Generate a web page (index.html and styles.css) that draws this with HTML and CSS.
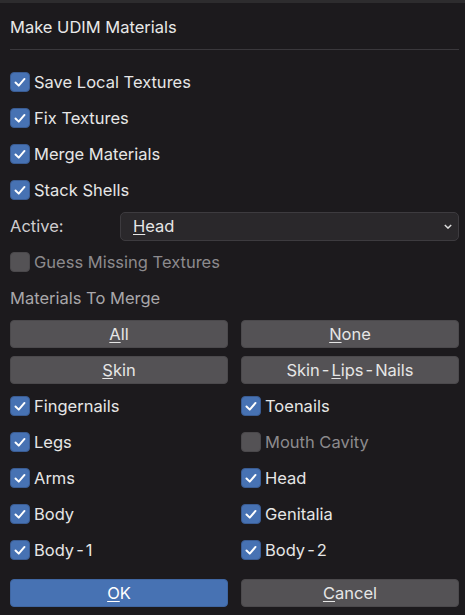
FILE: index.html
```html
<!DOCTYPE html>
<html>
<head>
<meta charset="utf-8">
<link rel="stylesheet" href="styles.css">
</head>
<body>
<div class="strip"></div>
<div class="dialog">
  <div class="title">Make UDIM Materials</div>
  <div class="sep"></div>
  <div class="opts">
    <div class="row"><span class="cb on"><svg viewBox="0 0 20 20"><path d="M5 10.5 L8.6 14 L15 6.6"/></svg></span><span class="lbl">Save Local Textures</span></div>
    <div class="row"><span class="cb on"><svg viewBox="0 0 20 20"><path d="M5 10.5 L8.6 14 L15 6.6"/></svg></span><span class="lbl">Fix Textures</span></div>
    <div class="row"><span class="cb on"><svg viewBox="0 0 20 20"><path d="M5 10.5 L8.6 14 L15 6.6"/></svg></span><span class="lbl">Merge Materials</span></div>
    <div class="row"><span class="cb on"><svg viewBox="0 0 20 20"><path d="M5 10.5 L8.6 14 L15 6.6"/></svg></span><span class="lbl">Stack Shells</span></div>
    <div class="row active-row">
      <span class="field-lbl">Active:</span>
      <div class="select"><span><u>H</u>ead</span><svg class="chev" viewBox="0 0 10 6"><path d="M1 1 L5 5 L9 1"/></svg></div>
    </div>
    <div class="row dis"><span class="cb off"></span><span class="lbl">Guess Missing Textures</span></div>
    <div class="row section">Materials To Merge</div>
  </div>
  <div class="btns">
    <div class="btn"><u>A</u>ll</div>
    <div class="btn"><u>N</u>one</div>
    <div class="btn"><u>S</u>kin</div>
    <div class="btn">Skin<span class="d">-</span><u>L</u>ips<span class="d">-</span>Nails</div>
  </div>
  <div class="grid">
    <div class="row"><span class="cb on"><svg viewBox="0 0 20 20"><path d="M5 10.5 L8.6 14 L15 6.6"/></svg></span><span class="lbl">Fingernails</span></div>
    <div class="row"><span class="cb on"><svg viewBox="0 0 20 20"><path d="M5 10.5 L8.6 14 L15 6.6"/></svg></span><span class="lbl">Toenails</span></div>
    <div class="row"><span class="cb on"><svg viewBox="0 0 20 20"><path d="M5 10.5 L8.6 14 L15 6.6"/></svg></span><span class="lbl">Legs</span></div>
    <div class="row dis"><span class="cb off"></span><span class="lbl">Mouth Cavity</span></div>
    <div class="row"><span class="cb on"><svg viewBox="0 0 20 20"><path d="M5 10.5 L8.6 14 L15 6.6"/></svg></span><span class="lbl">Arms</span></div>
    <div class="row"><span class="cb on"><svg viewBox="0 0 20 20"><path d="M5 10.5 L8.6 14 L15 6.6"/></svg></span><span class="lbl">Head</span></div>
    <div class="row"><span class="cb on"><svg viewBox="0 0 20 20"><path d="M5 10.5 L8.6 14 L15 6.6"/></svg></span><span class="lbl">Body</span></div>
    <div class="row"><span class="cb on"><svg viewBox="0 0 20 20"><path d="M5 10.5 L8.6 14 L15 6.6"/></svg></span><span class="lbl">Genitalia</span></div>
    <div class="row"><span class="cb on"><svg viewBox="0 0 20 20"><path d="M5 10.5 L8.6 14 L15 6.6"/></svg></span><span class="lbl">Body<span class="d">-</span>1</span></div>
    <div class="row"><span class="cb on"><svg viewBox="0 0 20 20"><path d="M5 10.5 L8.6 14 L15 6.6"/></svg></span><span class="lbl">Body<span class="d">-</span>2</span></div>
  </div>
  <div class="footer">
    <div class="btn ok"><u>O</u>K</div>
    <div class="btn"><u>C</u>ancel</div>
  </div>
</div>
</body>
</html>
```
FILE: styles.css
```css
html, body {
  margin: 0;
  padding: 0;
  background: #1c1a1d;
  width: 465px;
  height: 615px;
  overflow: hidden;
}
body {
  font-family: Inter, "Noto Sans", sans-serif;
  font-size: 16.5px;
  color: #e6e6e6;
}
.strip {
  height: 3px;
  background: #2d2c2e;
}
.dialog {
  padding: 0 6px 0 10px;
}
.title {
  height: 20px;
  line-height: 20px;
  margin-top: 14px;
  color: #e8e8e8;
}
.sep {
  margin-top: 12px;
  height: 1px;
  background: #3a383c;
}
.opts {
  margin-top: 14px;
}
.row {
  height: 36px;
  display: flex;
  align-items: center;
}
.cb {
  width: 20px;
  height: 20px;
  border-radius: 4px;
  box-sizing: border-box;
  flex: none;
  display: flex;
  align-items: center;
  justify-content: center;
}
.cb.on {
  background: #4772b3;
  border: 1px solid #3a5c93;
}
.cb.off {
  background: #545255;
  border: 1px solid #4a484b;
}
.cb svg {
  width: 20px;
  height: 20px;
}
.cb svg path {
  fill: none;
  stroke: #ffffff;
  stroke-width: 2.2;
  stroke-linecap: round;
  stroke-linejoin: round;
}
.lbl {
  margin-left: 4px;
  white-space: nowrap;
}
.dis .lbl {
  color: #8c8a8d;
}
.field-lbl {
  width: 110px;
  color: #cfcdd0;
  flex: none;
}
.select {
  flex: 1;
  height: 29px;
  box-sizing: border-box;
  background: #2a282b;
  border: 1px solid #3d3b3f;
  border-radius: 5px;
  display: flex;
  align-items: center;
  justify-content: space-between;
  padding: 0 6px 0 12px;
}
.chev {
  width: 8px;
  height: 5px;
}
.chev path {
  fill: none;
  stroke: #dcdcdc;
  stroke-width: 1.8;
}
.section {
  color: #a9a7aa;
}
u {
  text-decoration-thickness: 1px;
  text-underline-offset: 2px;
}
.d {
  margin: 0 2px;
}
.btns {
  margin-top: 4px;
  display: grid;
  grid-template-columns: 1fr 1fr;
  column-gap: 13px;
  row-gap: 8px;
}
.btn {
  height: 28px;
  box-sizing: border-box;
  background: #545255;
  border: 1px solid #4b494c;
  border-radius: 4px;
  display: flex;
  align-items: center;
  justify-content: center;
  color: #e6e6e6;
}
.grid {
  margin-top: 4px;
  display: grid;
  grid-template-columns: 1fr 1fr;
  column-gap: 13px;
}
.footer {
  margin-top: 11px;
  display: grid;
  grid-template-columns: 1fr 1fr;
  column-gap: 13px;
}
.btn.ok {
  background: #4772b3;
  border-color: #3f66a2;
  color: #ffffff;
}
```
